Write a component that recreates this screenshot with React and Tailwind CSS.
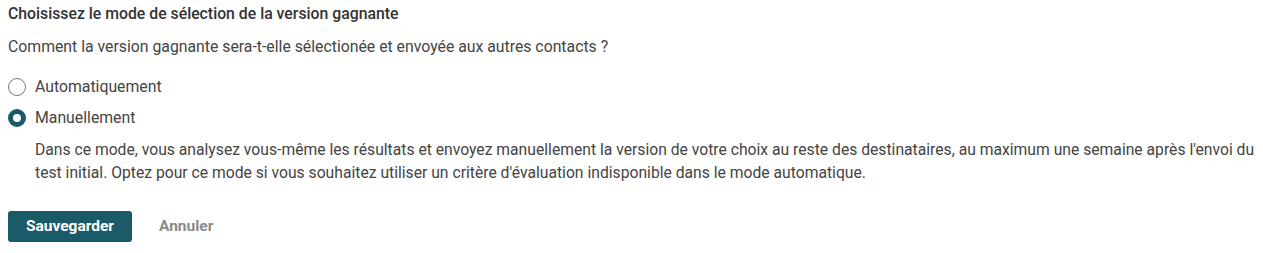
import React, { useState } from "react";

function Radio({ checked, label, onClick }) {
  return (
    <label className="flex items-center gap-[9px] h-5 cursor-pointer" onClick={onClick}>
      <span
        className={`${
          checked
            ? "border-[5px] border-[#1d5a69]"
            : "border border-[#777]"
        } w-[18px] h-[18px] rounded-full bg-white box-border`}
      ></span>
      <span className="text-[15.8px] leading-5 text-[#444]">{label}</span>
    </label>
  );
}

export default function App() {
  const [mode, setMode] = useState("manual");
  return (
    <div className="bg-white pl-2 pt-[4px] font-['Roboto',sans-serif] text-[#444] w-[1263px] h-[253px]">
      <h3 className="text-[15.8px] font-medium text-[#333] leading-5">
        Choisissez le mode de sélection de la version gagnante
      </h3>
      <p className="mt-[13px] text-[15.8px] leading-5">
        Comment la version gagnante sera-t-elle sélectionée et envoyée aux autres contacts ?
      </p>
      <div className="mt-[20px] flex flex-col gap-[11px]">
        <Radio
          label="Automatiquement"
          checked={mode === "auto"}
          onClick={() => setMode("auto")}
        />
        <Radio
          label="Manuellement"
          checked={mode === "manual"}
          onClick={() => setMode("manual")}
        />
      </div>
      <p className="mt-[10px] ml-[27px] text-[15.7px] leading-[23px]">
        Dans ce mode, vous analysez vous-même les résultats et envoyez manuellement la version de votre choix au reste des destinataires, au maximum une semaine après l'envoi du test initial. Optez pour ce mode si vous souhaitez utiliser un critère d'évaluation indisponible dans le mode automatique.
      </p>
      <div className="mt-[27px] flex items-center gap-[27px]">
        <button className="bg-[#1b5a68] text-white font-bold text-[15.5px] rounded-[3px] h-[31px] w-[124px]">
          Sauvegarder
        </button>
        <button className="text-[#8a8a8a] font-bold text-[15.5px]">Annuler</button>
      </div>
    </div>
  );
}
